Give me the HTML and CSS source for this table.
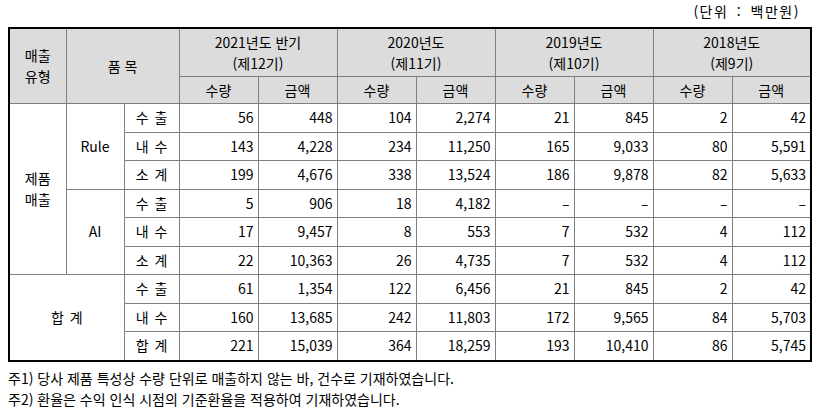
FILE: index.html
```html
<!DOCTYPE html>
<html lang="ko">
<head>
<meta charset="utf-8">
<link rel="stylesheet" href="styles.css">
</head>
<body>
<div class="page">
  <div class="unit">(단위 : 백만원)</div>
  <table class="sales">
    <colgroup>
      <col class="c-type"><col class="c-item"><col class="c-sub">
      <col class="c-num"><col class="c-num"><col class="c-num"><col class="c-num">
      <col class="c-num"><col class="c-num"><col class="c-num"><col class="c-num">
    </colgroup>
    <thead>
      <tr class="h1">
        <th rowspan="2">매출<br>유형</th>
        <th rowspan="2" colspan="2">품 목</th>
        <th colspan="2">2021년도 반기<br>(제12기)</th>
        <th colspan="2">2020년도<br>(제11기)</th>
        <th colspan="2">2019년도<br>(제10기)</th>
        <th colspan="2">2018년도<br>(제9기)</th>
      </tr>
      <tr class="h2">
        <th>수량</th><th>금액</th><th>수량</th><th>금액</th>
        <th>수량</th><th>금액</th><th>수량</th><th>금액</th>
      </tr>
    </thead>
    <tbody>
      <tr>
        <td rowspan="6" class="ctr">제품<br>매출</td>
        <td rowspan="3" class="ctr">Rule</td>
        <td class="ctr">수 출</td>
        <td>56</td><td>448</td><td>104</td><td>2,274</td><td>21</td><td>845</td><td>2</td><td>42</td>
      </tr>
      <tr>
        <td class="ctr">내 수</td>
        <td>143</td><td>4,228</td><td>234</td><td>11,250</td><td>165</td><td>9,033</td><td>80</td><td>5,591</td>
      </tr>
      <tr>
        <td class="ctr">소 계</td>
        <td>199</td><td>4,676</td><td>338</td><td>13,524</td><td>186</td><td>9,878</td><td>82</td><td>5,633</td>
      </tr>
      <tr>
        <td rowspan="3" class="ctr">AI</td>
        <td class="ctr">수 출</td>
        <td>5</td><td>906</td><td>18</td><td>4,182</td><td>–</td><td>–</td><td>–</td><td>–</td>
      </tr>
      <tr>
        <td class="ctr">내 수</td>
        <td>17</td><td>9,457</td><td>8</td><td>553</td><td>7</td><td>532</td><td>4</td><td>112</td>
      </tr>
      <tr>
        <td class="ctr">소 계</td>
        <td>22</td><td>10,363</td><td>26</td><td>4,735</td><td>7</td><td>532</td><td>4</td><td>112</td>
      </tr>
      <tr>
        <td rowspan="3" colspan="2" class="ctr">합 계</td>
        <td class="ctr">수 출</td>
        <td>61</td><td>1,354</td><td>122</td><td>6,456</td><td>21</td><td>845</td><td>2</td><td>42</td>
      </tr>
      <tr>
        <td class="ctr">내 수</td>
        <td>160</td><td>13,685</td><td>242</td><td>11,803</td><td>172</td><td>9,565</td><td>84</td><td>5,703</td>
      </tr>
      <tr>
        <td class="ctr">합 계</td>
        <td>221</td><td>15,039</td><td>364</td><td>18,259</td><td>193</td><td>10,410</td><td>86</td><td>5,745</td>
      </tr>
    </tbody>
  </table>
  <div class="notes">
    <p>주1) 당사 제품 특성상 수량 단위로 매출하지 않는 바, 건수로 기재하였습니다.</p>
    <p>주2) 환율은 수익 인식 시점의 기준환율을 적용하여 기재하였습니다.</p>
  </div>
</div>
</body>
</html>
```

FILE: styles.css
```css
html, body {
  margin: 0;
  padding: 0;
  background: #ffffff;
}

.page {
  padding: 0 14px 0 8px;
  font-family: "Noto Sans CJK KR", "Noto Sans", sans-serif;
  font-size: 14px;
  color: #000000;
  width: 802px;
}

.unit {
  height: 27px;
  line-height: 22px;
  text-align: right;
  padding-right: 10px;
  box-sizing: border-box;
  letter-spacing: 1.5px;
  word-spacing: 3px;
}

.sales {
  width: 802px;
  table-layout: fixed;
  border-collapse: collapse;
  border: 2px solid #000000;
}

.c-type { width: 57px; }
.c-item { width: 58px; }
.c-sub { width: 55px; }
.c-num { width: 79px; }

.sales th,
.sales td {
  border: 1px solid #808080;
  padding: 0 4px;
  font-weight: normal;
  line-height: 21px;
  white-space: nowrap;
}

.sales th {
  background: #dcdcdc;
  text-align: center;
}

.h1 th { height: 47px; }
.h2 th { height: 26px; }

.sales td {
  text-align: right;
  height: 27.5px;
}

.sales td.ctr {
  text-align: center;
  word-spacing: 2px;
}

.notes {
  margin-top: 6px;
}

.notes p {
  margin: 0;
  line-height: 21px;
}
```
